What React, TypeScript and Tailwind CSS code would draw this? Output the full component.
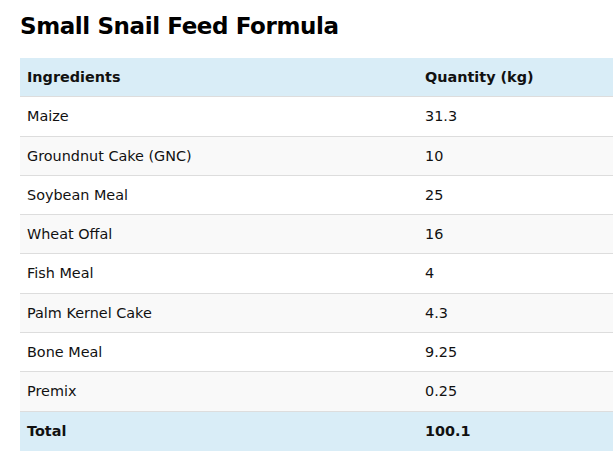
const rows: [string, string][] = [
  ["Maize", "31.3"],
  ["Groundnut Cake (GNC)", "10"],
  ["Soybean Meal", "25"],
  ["Wheat Offal", "16"],
  ["Fish Meal", "4"],
  ["Palm Kernel Cake", "4.3"],
  ["Bone Meal", "9.25"],
  ["Premix", "0.25"],
];

export default function App() {
  return (
    <div className="min-h-screen bg-white pl-5 pt-[11px] text-[#111] [font-family:'DejaVu_Sans',Verdana,sans-serif]">
      <h1 className="text-[23px] font-bold leading-[30px] tracking-[-0.4px] text-black">
        Small Snail Feed Formula
      </h1>
      <table className="mt-[17px] w-[593px] border-collapse text-[14.4px]">
        <thead>
          <tr className="bg-[#d9edf7]">
            <th className="w-[398px] border-b border-[#dddddd] px-[7px] py-[11px] text-left font-bold leading-[16.3px]">
              Ingredients
            </th>
            <th className="border-b border-[#dddddd] px-[7px] py-[11px] text-left font-bold leading-[16.3px]">
              Quantity (kg)
            </th>
          </tr>
        </thead>
        <tbody>
          {rows.map(([name, qty], i) => (
            <tr key={name} className={i % 2 === 1 ? "bg-[#f9f9f9]" : "bg-white"}>
              <td className="border-b border-[#dddddd] px-[7px] py-[11px] leading-[16.3px]">{name}</td>
              <td className="border-b border-[#dddddd] px-[7px] py-[11px] leading-[16.3px]">{qty}</td>
            </tr>
          ))}
          <tr className="bg-[#d9edf7] font-bold">
            <td className="px-[7px] py-[11px] leading-[17.3px]">Total</td>
            <td className="px-[7px] py-[11px] leading-[17.3px]">100.1</td>
          </tr>
        </tbody>
      </table>
    </div>
  );
}
